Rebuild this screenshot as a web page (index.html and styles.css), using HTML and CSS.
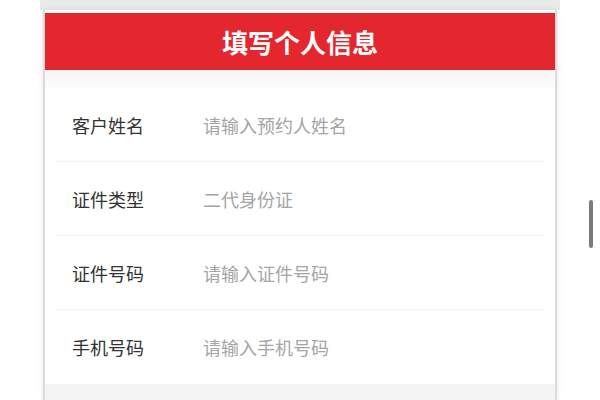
FILE: index.html
```html
<!DOCTYPE html>
<html lang="zh-CN">
<head>
<meta charset="utf-8">
<title>填写个人信息</title>
<link rel="stylesheet" href="styles.css">
</head>
<body>
<div class="page">
  <div class="top-strip"></div>
  <div class="card">
    <div class="header">填写个人信息</div>
    <div class="gap"></div>
    <div class="row">
      <span class="label">客户姓名</span>
      <span class="value">请输入预约人姓名</span>
    </div>
    <div class="row">
      <span class="label">证件类型</span>
      <span class="value">二代身份证</span>
    </div>
    <div class="row">
      <span class="label">证件号码</span>
      <span class="value">请输入证件号码</span>
    </div>
    <div class="row last">
      <span class="label">手机号码</span>
      <span class="value">请输入手机号码</span>
    </div>
    <div class="footer"></div>
  </div>
</div>
<div class="scrollbar"></div>
</body>
</html>
```

FILE: styles.css
```css
html, body {
  margin: 0;
  padding: 0;
  height: 100%;
  background: #ffffff;
  overflow: hidden;
}

body {
  font-family: "Noto Sans CJK SC", "Noto Sans", sans-serif;
}

.page {
  display: flex;
  flex-direction: column;
  height: 400px;
  padding: 0 43px;
}

.top-strip {
  height: 10px;
  margin: 0 -3px;
  background: #e9eaea;
}

.card {
  flex: 1;
  display: flex;
  flex-direction: column;
  padding-top: 3px;
  background: #ffffff;
  border-left: 2px solid #dadada;
  border-right: 2px solid #dadada;
  box-shadow: 0 0 5px rgba(0, 0, 0, 0.10);
}

.header {
  height: 57px;
  line-height: 57px;
  background: #e4262e;
  color: #ffffff;
  font-size: 26px;
  font-weight: 700;
  text-align: center;
}

.gap {
  height: 18px;
  background: linear-gradient(#f6f6f6, #fcfcfc);
}

.row {
  height: 73px;
  display: flex;
  align-items: center;
  margin: 0 10px;
  padding-left: 17px;
  border-bottom: 1px solid #f4f4f4;
  font-size: 18px;
}

.row.last {
  border-bottom: none;
  height: 74px;
}

.label {
  width: 131px;
  color: #333333;
}

.value {
  color: #a5a5a5;
}

.footer {
  flex: 1;
  background: #f4f4f4;
}

.scrollbar {
  position: absolute;
  left: 589px;
  top: 200px;
  width: 4px;
  height: 48px;
  border-radius: 2px;
  background: #7a7a7a;
}
```
